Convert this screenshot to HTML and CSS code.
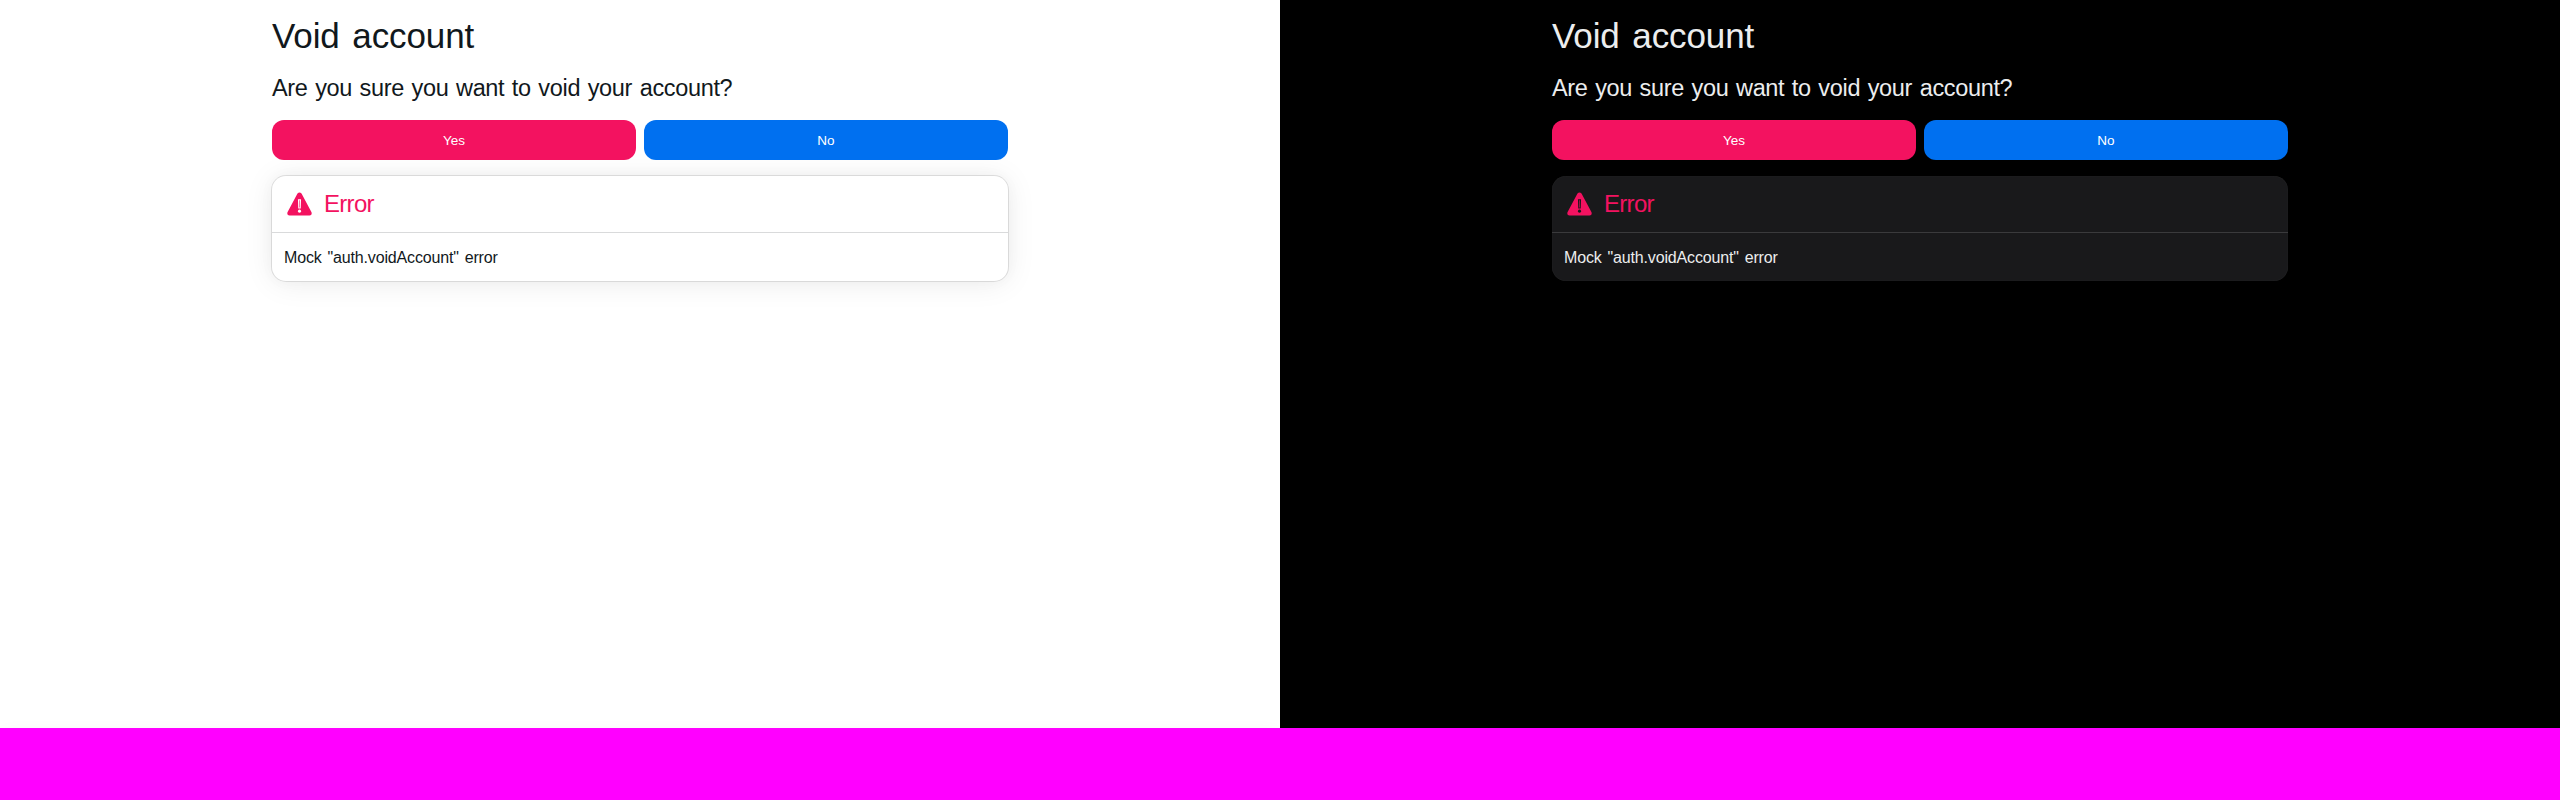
FILE: index.html
```html
<!DOCTYPE html>
<html lang="en">
<head>
<meta charset="utf-8">
<title>Void account</title>
<link rel="stylesheet" href="styles.css">
</head>
<body>
<div class="themes">
  <section class="theme light">
    <main class="container">
      <h1 class="title"><span>Void account</span></h1>
      <h3 class="question"><span>Are you sure you want to void your account?</span></h3>
      <div class="actions">
        <button class="button danger"><span>Yes</span></button>
        <button class="button primary"><span>No</span></button>
      </div>
      <article class="card">
        <header class="card-header">
          <svg class="icon" viewBox="0 0 26 24"><path fill-rule="evenodd" d="M10.9 1.2Q13-1.2 15.1 1.2L25.5 20.6Q26.4 23.8 23.4 24H2.6Q-.4 23.8.5 20.6ZM11.4 7h3.2l-.3 9.6h-2.6ZM13 17.8a1.7 1.7 0 1 0 .01 0Z"/><path d="M12.7 8h.6v7.6h-.6Z"/></svg>
          <h3 class="card-title"><span>Error</span></h3>
        </header>
        <p class="card-body"><span>Mock "auth.voidAccount" error</span></p>
      </article>
    </main>
  </section>
  <section class="theme dark">
    <main class="container">
      <h1 class="title"><span>Void account</span></h1>
      <h3 class="question"><span>Are you sure you want to void your account?</span></h3>
      <div class="actions">
        <button class="button danger"><span>Yes</span></button>
        <button class="button primary"><span>No</span></button>
      </div>
      <article class="card">
        <header class="card-header">
          <svg class="icon" viewBox="0 0 26 24"><path fill-rule="evenodd" d="M10.9 1.2Q13-1.2 15.1 1.2L25.5 20.6Q26.4 23.8 23.4 24H2.6Q-.4 23.8.5 20.6ZM11.4 7h3.2l-.3 9.6h-2.6ZM13 17.8a1.7 1.7 0 1 0 .01 0Z"/><path d="M12.7 8h.6v7.6h-.6Z"/></svg>
          <h3 class="card-title"><span>Error</span></h3>
        </header>
        <p class="card-body"><span>Mock "auth.voidAccount" error</span></p>
      </article>
    </main>
  </section>
</div>
<footer class="footer">
  <div class="bar bar-raised"></div>
  <div class="bar"></div>
</footer>
</body>
</html>
```
FILE: styles.css
```css
* { box-sizing: border-box; }
body {
  margin: 0;
  height: 800px;
  display: flex;
  flex-direction: column;
  overflow: hidden;
  font-family: "Liberation Sans", Arial, sans-serif;
}
.themes { flex: 1; display: grid; grid-template-columns: 1fr 1fr; }
.theme { display: flex; justify-content: center; overflow: hidden; }
.light {
  --text: #11181c;
  --card: #fff;
  --line: #d9dadb;
  --shadow: 0 0 15px rgb(0 0 0 / 3%), 0 2px 30px rgb(0 0 0 / 8%), 0 0 0 1px rgb(0 0 0 / 10%);
  background: #fff;
}
.dark {
  --text: #ecedee;
  --card: #19191b;
  --line: #3a3a3c;
  --shadow: inset 0 0 1px rgb(255 255 255 / 15%);
  background: #000;
}
.container { width: 736px; color: var(--text); }
h1, h3, p { margin: 0; font-weight: 400; }
.title { font-size: 35px; line-height: 54px; padding-top: 9px; height: 63px; letter-spacing: -.1px; word-spacing: 3px; }
.question { font-size: 23.5px; line-height: 36px; padding-top: 7px; height: 57px; letter-spacing: -.34px; word-spacing: 1.4px; }
.actions { display: grid; grid-template-columns: 1fr 1fr; gap: 8px; }
.button {
  height: 40px;
  border: 0;
  border-radius: 12px;
  padding: 1px 0 0;
  color: #fff;
  font: 13.5px/20px "Liberation Sans", Arial, sans-serif;
}
.danger { background: #f31260; }
.primary { background: #0070f0; }
.card {
  height: 105px;
  margin-top: 16px;
  border-radius: 14px;
  background: var(--card);
  box-shadow: var(--shadow);
}
.card-header { display: flex; align-items: center; height: 57px; padding-left: 15px; border-bottom: 1px solid var(--line); color: #f31260; }
.icon { width: 25px; height: 24px; fill: currentColor; }
.card-title { font-size: 24px; line-height: 36px; margin-left: 12px; letter-spacing: -.7px; }
.card-body { padding: 13px 12px 11px; font-size: 16px; line-height: 24px; letter-spacing: -.15px; word-spacing: 1.5px; }
.footer { height: 72px; display: grid; grid-template-columns: 1fr 1fr; }
.bar { background: #f0f; }
.bar-raised { box-shadow: 0 5px 20px -5px rgb(0 0 0 / 10%); clip-path: inset(-30px 0 0 0); }
```
